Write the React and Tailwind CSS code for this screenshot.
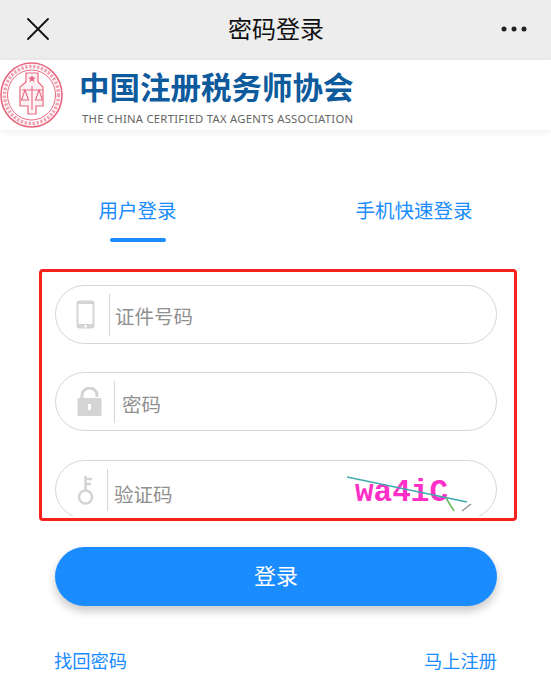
import { X } from 'lucide-react'

const cjk = '"Noto Sans CJK SC", "Noto Sans", sans-serif'

function PhoneIcon() {
  return (
    <svg width="20" height="30" viewBox="0 0 20 30">
      <rect x="0.5" y="0.5" width="18" height="28" rx="3" fill="#d4d4d4" />
      <rect x="2.5" y="4" width="14" height="20" fill="#fff" />
      <circle cx="9.5" cy="26.2" r="1.3" fill="#fff" />
    </svg>
  )
}

function LockIcon() {
  return (
    <svg width="25" height="29" viewBox="0 0 25 29">
      <path d="M5 13 V8 a7.5 7 0 0 1 15 0 V10" fill="none" stroke="#d4d4d4" strokeWidth="3" />
      <rect x="0.5" y="11" width="24" height="18" rx="1.5" fill="#d4d4d4" />
      <rect x="11" y="17" width="3" height="6" fill="#fff" />
    </svg>
  )
}

function KeyIcon() {
  return (
    <svg width="18" height="30" viewBox="0 0 18 30">
      <circle cx="8.5" cy="22" r="6.5" fill="none" stroke="#d4d4d4" strokeWidth="2.5" />
      <path d="M8.5 15 V1 M8.5 4 H15 M8.5 9 H14" fill="none" stroke="#d4d4d4" strokeWidth="2.5" />
    </svg>
  )
}

function DotsIcon() {
  return (
    <svg width="40" height="40" viewBox="0 0 40 40">
      <circle cx="10" cy="20" r="2.5" fill="#222" />
      <circle cx="20" cy="20" r="2.5" fill="#222" />
      <circle cx="30" cy="20" r="2.5" fill="#222" />
    </svg>
  )
}

function Seal() {
  return (
    <svg width="64" height="70" viewBox="0 0 64 70" className="shrink-0">
      <ellipse cx="31.5" cy="35" rx="30.5" ry="32" fill="#fff" stroke="#e9687f" strokeWidth="1.6" />
      <ellipse cx="31.5" cy="35" rx="27" ry="28.5" fill="none" stroke="#f2a3b1" strokeWidth="3.5" strokeDasharray="2.5 1.5" />
      <ellipse cx="31.5" cy="35" rx="24" ry="25" fill="#fff" stroke="#e9687f" strokeWidth="1" />
      <path d="M26 13 H38 V22 L43 27 V46 H36 V54 H28 V46 H20 V27 L26 22 Z" fill="#fdf3f5" stroke="#e9687f" strokeWidth="1.2" />
      <path d="M22 30 H42 M32 26 V50 M25 30 L21.5 40 H28.5 Z M39 30 L35.5 40 H42.5 Z" fill="none" stroke="#e9687f" strokeWidth="1.1" />
      <path d="M32 15 l1.2 2.6 h2.8 l-2.3 1.8 .9 2.8 -2.6 -1.7 -2.6 1.7 .9 -2.8 -2.3 -1.8 h2.8 z" fill="#e9687f" />
    </svg>
  )
}

function Field({ icon, iconClass, dividerClass, labelClass, label, children }) {
  return (
    <div className="h-[59px] rounded-[30px] border border-[#d6d6d6] bg-white flex items-center relative shrink-0">
      <div className={`flex justify-center ${iconClass}`}>{icon}</div>
      <div className={`w-px h-[42px] bg-[#d6d6d6] ${dividerClass}`} />
      <span className={`text-[19.5px] text-[#8f8f8f] ${labelClass}`}>{label}</span>
      {children}
    </div>
  )
}

function Captcha() {
  return (
    <div className="absolute left-[291px] top-[15px] w-[126px] h-[40px]">
      <span className="absolute left-[8px] top-[-1px] text-[31px] leading-[36px] font-bold text-[#ff2fc8]" style={{ fontFamily: '"Liberation Mono", monospace' }}>wa4iC</span>
      <svg width="126" height="40" viewBox="0 0 126 40" className="absolute left-0 top-0">
        <path d="M0 1 L120 26" stroke="#3fa9ad" strokeWidth="1.3" />
        <path d="M99 22 L107 35" stroke="#62b558" strokeWidth="1.5" />
        <path d="M115 35 L124 28" stroke="#8a8a8a" strokeWidth="1.2" />
      </svg>
    </div>
  )
}

export default function App() {
  return (
    <div className="w-[551px] h-[699px] bg-white relative overflow-hidden" style={{ fontFamily: cjk }}>
      <div className="h-[60px] bg-[#ededed] flex items-center justify-between pl-[18px] pr-[17px] pb-[2px]">
        <X size={40} strokeWidth={1.1} color="#111" />
        <span className="text-[24px] text-[#111] pb-[3px]">密码登录</span>
        <DotsIcon />
      </div>

      <div className="h-[70px] bg-white flex items-center shadow-[0_2px_8px_rgba(0,0,0,0.07)]">
        <Seal />
        <div className="ml-[15px] pt-[3px] flex flex-col items-start">
          <span className="text-[30.5px] leading-[36px] font-bold text-[#0d5a9c] whitespace-nowrap">中国注册税务师协会</span>
          <span className="mt-[8px] ml-[3px] text-[11.3px] leading-[13px] text-[#666] tracking-[0.25px] whitespace-nowrap" style={{ fontFamily: '"Noto Sans", sans-serif' }}>THE CHINA CERTIFIED TAX AGENTS ASSOCIATION</span>
        </div>
      </div>

      <div className="flex pt-[65px] pl-[55px] pr-[54px] justify-between">
        <div className="flex flex-col items-center w-[165px]">
          <span className="text-[19.5px] leading-[30px] text-[#1a8cff]">用户登录</span>
          <div className="mt-[13px] w-[56px] h-[4px] rounded-full bg-[#1a8cff]" />
        </div>
        <span className="w-[166px] h-[30px] text-center text-[19.5px] leading-[30px] text-[#1a8cff]">手机快速登录</span>
      </div>

      <div className="mt-[43px] ml-[55px] w-[442px] h-[231px] overflow-hidden flex flex-col">
        <Field icon={<PhoneIcon />} iconClass="w-[60px]" dividerClass="ml-[-7px]" labelClass="ml-[5px] pt-[3px]" label="证件号码" />
        <div className="mt-[28px]">
          <Field icon={<LockIcon />} iconClass="w-[66px]" dividerClass="ml-[-8px]" labelClass="ml-[7px] pt-[5px]" label="密码" />
        </div>
        <div className="mt-[29px]">
          <Field icon={<KeyIcon />} iconClass="w-[59px]" dividerClass="ml-[-8px]" labelClass="ml-[6px] pt-[9px]" label="验证码"><Captcha /></Field>
        </div>
      </div>

      <div className="mt-[31px] ml-[55px] w-[442px] h-[59px] rounded-[30px] bg-[#1a8cff] text-white text-[22px] pb-[5px] flex items-center justify-center shadow-[0_5px_10px_rgba(0,0,0,0.22)]">登录</div>

      <div className="mt-[39px] ml-[54px] w-[443px] flex justify-between text-[18.3px] leading-[30px] text-[#1a8cff]">
        <span>找回密码</span>
        <span>马上注册</span>
      </div>

      <div className="absolute left-[39px] top-[269px] w-[478px] h-[252px] border-[3px] border-[#f5231c] rounded-[4px]" />
    </div>
  )
}
